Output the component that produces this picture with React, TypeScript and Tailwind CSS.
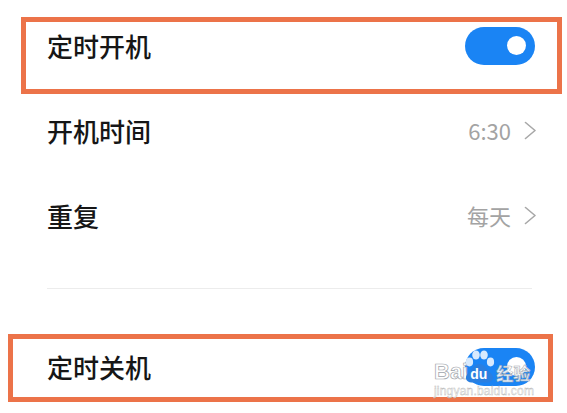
import React from "react";

const cjk = { fontFamily: '"Noto Sans CJK SC", "Noto Sans", sans-serif' };

function Toggle() {
  return (
    <div className="flex h-[38px] w-[70px] items-center justify-end rounded-full bg-[#1a84f4] pr-[9px]">
      <div className="h-[19px] w-[19px] rounded-full bg-white" />
    </div>
  );
}

function Chevron() {
  return (
    <svg width="12" height="19" viewBox="0 0 12 19" fill="none">
      <polyline points="1.5,1.5 11,9.5 1.5,17.5" stroke="#a8a8a8" strokeWidth="1.6" strokeLinejoin="round" strokeLinecap="round" />
    </svg>
  );
}

function Row({ label, value, toggle }: { label: string; value?: string; toggle?: boolean }) {
  return (
    <div className="flex h-[85px] items-center justify-between pl-[47px] pr-[32px]">
      <span className="text-[26px] font-medium text-[#161616]">{label}</span>
      {toggle ? (
        <Toggle />
      ) : (
        <div className="-mr-[1px] flex items-center gap-[13px]">
          <span className="text-[22px] text-[#a3a3a3]">{value}</span>
          <Chevron />
        </div>
      )}
    </div>
  );
}

function Watermark() {
  return (
    <div className="pointer-events-none absolute left-[434px] top-[350px] flex w-[106px] flex-col items-start">
      <div className="flex h-[33px] items-end">
        <span
          className="mb-[1px] text-[22px] font-bold leading-[20px] text-white/85"
          style={{ fontFamily: '"Liberation Sans", sans-serif', WebkitTextStroke: "0.7px #a0a4aa" }}
        >
          Bai
        </span>
        <div className="relative -ml-[4px] h-[33px] w-[31px]">
          <svg width="31" height="33" viewBox="0 0 31 33" className="absolute left-0 top-0">
            <ellipse cx="5.5" cy="12" rx="3.6" ry="4.4" fill="#d8eafd" />
            <ellipse cx="12" cy="5" rx="3.8" ry="4.6" fill="#d8eafd" />
            <ellipse cx="20" cy="5" rx="3.8" ry="4.6" fill="#d8eafd" />
            <ellipse cx="26.5" cy="12" rx="3.6" ry="4.4" fill="#d8eafd" />
            <path d="M15.5 14 C10 14 8 20 4 23.5 C0 27 2 32.5 7.5 32.5 L23.5 32.5 C29 32.5 31 27 27 23.5 C23 20 21 14 15.5 14 Z" fill="#2a7fe0" />
          </svg>
          <span
            className="absolute left-[6px] top-[18px] text-[14px] font-bold leading-[13px] text-white"
            style={{ fontFamily: '"Liberation Sans", sans-serif' }}
          >
            du
          </span>
        </div>
        <span
          className="mb-[1px] ml-[1px] text-[17px] font-bold leading-[18px] text-white/85"
          style={{ ...cjk, WebkitTextStroke: "0.5px #a0a4aa" }}
        >
          经验
        </span>
      </div>
      <span
        className="mt-[2px] text-[12px] leading-[12px] tracking-[0.2px] text-white/70"
        style={{ fontFamily: '"Liberation Sans", sans-serif', WebkitTextStroke: "0.4px #b4b4b4" }}
      >
        jingyan.baidu.com
      </span>
    </div>
  );
}

export default function App() {
  return (
    <div className="relative h-[413px] w-[567px] overflow-hidden bg-white" style={cjk}>
      <div className="flex flex-col pt-[3px]">
        <Row label="定时开机" toggle />
        <Row label="开机时间" value="6:30" />
        <Row label="重复" value="每天" />
        <div className="ml-[47px] mr-[35px] mt-[30px] h-px bg-[#ececec]" />
        <div className="mt-[35px]">
          <Row label="定时关机" toggle />
        </div>
      </div>

      {/* annotation boxes */}
      <div className="pointer-events-none absolute left-[21px] top-[17px] h-[77px] w-[541px] border-[5px] border-[#ec7349]" />
      <div className="pointer-events-none absolute left-[8px] top-[334px] h-[68px] w-[545px] border-[5px] border-[#ec7349]" />

      <Watermark />
    </div>
  );
}
